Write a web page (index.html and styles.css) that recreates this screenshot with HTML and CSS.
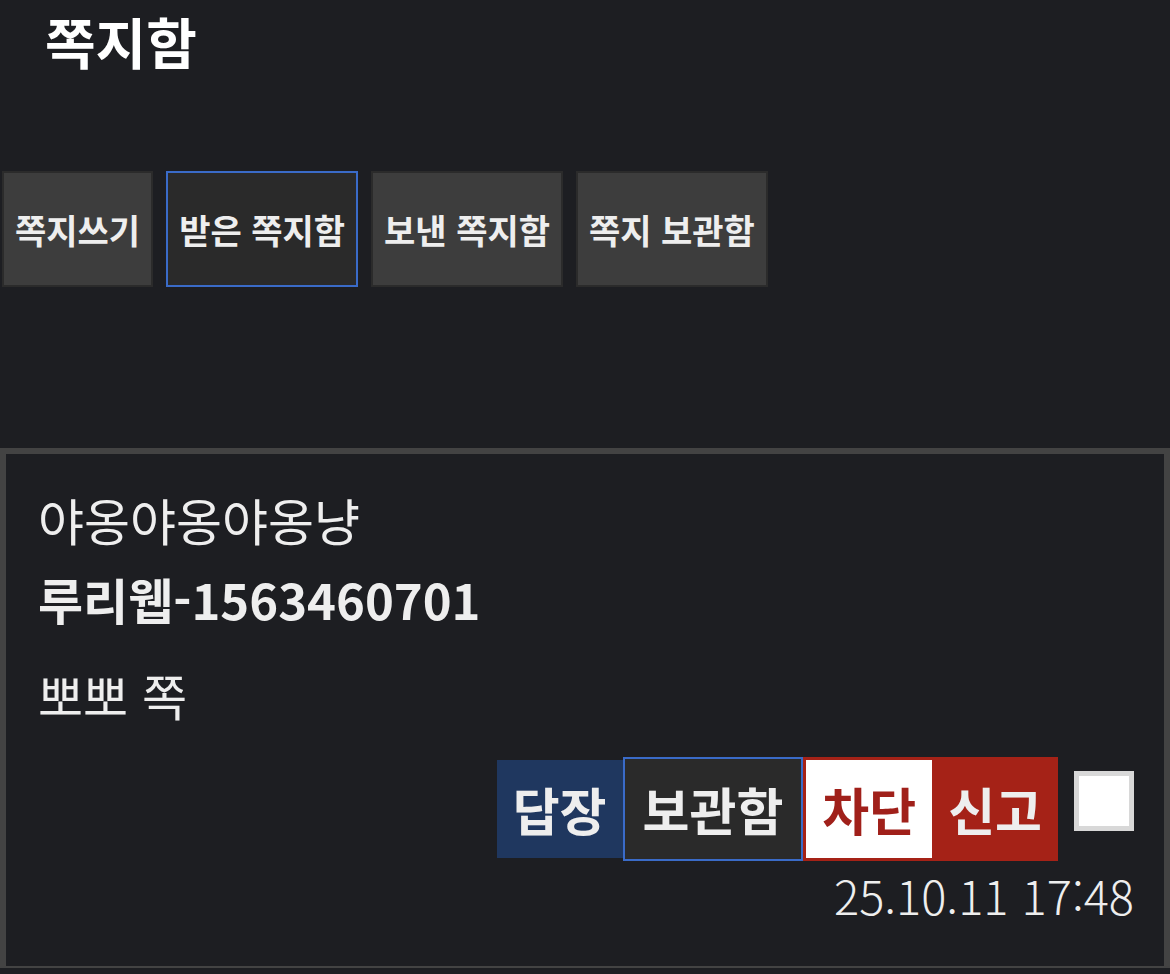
FILE: index.html
```html
<!DOCTYPE html>
<html lang="ko">
<head>
  <meta charset="UTF-8">
  <title>쪽지함</title>
  <link rel="stylesheet" href="styles.css">
</head>
<body>

  <div class="header">
    <h1>쪽지함</h1>
  </div>

  <!-- Tabs -->
  <div class="tabs">
    <a class="tab">쪽지쓰기</a>
    <a class="tab active">받은 쪽지함</a>
    <a class="tab">보낸 쪽지함</a>
    <a class="tab">쪽지 보관함</a>
  </div>

  <!-- Message -->
  <div class="message">
    <p class="subject">야옹야옹야옹냥</p>
    <p class="sender">루리웹-1563460701</p>
    <p class="body">뽀뽀 쪽</p>

    <div class="actions">
      <button class="btn reply">답장</button>
      <button class="btn keep">보관함</button>
      <button class="btn block">차단</button>
      <button class="btn report">신고</button>
      <span class="check"></span>
    </div>
    <div class="date">25.10.11 17:48</div>
  </div>

</body>
</html>
```

FILE: styles.css
```css
body {
  font-family: "Noto Sans CJK KR", "Noto Sans", sans-serif;
  background-color: #1d1e22;
  color: #eeeeee;
  margin: 0;
  padding: 0;
}

.header {
  height: 80px;
  padding-left: 45px;
  display: flex;
  align-items: center;
}

.header h1 {
  margin: 0;
  font-size: 55px;
  font-weight: 700;
  color: #ffffff;
  line-height: 1;
}

.tabs {
  display: flex;
  gap: 13px;
  padding: 91px 0 0 2px;
  height: 116px;
}

.tab {
  background-color: #3d3d3d;
  border: 2px solid #2b2b2b;
  height: 116px;
  box-sizing: border-box;
  padding: 0 11px;
  display: flex;
  align-items: center;
  font-size: 34px;
  font-weight: 700;
  color: #eeeeee;
}

.tab.active {
  background-color: #2a2a2a;
  border-color: #3a6bc8;
}

.message {
  margin-top: 161px;
  border: 6px solid #434343;
  border-bottom-width: 2px;
  padding: 25px 30px 0 32px;
  height: 520px;
  box-sizing: border-box;
}

.message p {
  margin: 0;
}

.message .subject {
  font-size: 50px;
  font-weight: 400;
  line-height: 80px;
}

.message .sender {
  font-size: 49px;
  font-weight: 700;
  line-height: 80px;
}

.message .body {
  font-size: 49px;
  font-weight: 400;
  line-height: 80px;
  margin-top: 16px;
}

.actions {
  display: flex;
  justify-content: flex-end;
  align-items: center;
  margin-top: 22px;
}

.btn {
  font-family: inherit;
  font-size: 51px;
  font-weight: 700;
  height: 104px;
  border: none;
  padding: 0 16px;
  color: #eeeeee;
  line-height: 1;
}

.reply {
  background-color: #1f375f;
  height: 98px;
}

.keep {
  background-color: #2a2a2a;
  border: 2px solid #3a6bc8;
  padding: 0 18px;
}

.block {
  background-color: #ffffff;
  color: #a0201a;
  border: 3px solid #a52217;
  border-right: none;
}

.report {
  background-color: #a52217;
}

.check {
  width: 50px;
  height: 50px;
  background-color: #ffffff;
  border: 5px solid #d8d8d8;
  margin: 0 0 16px 16px;
}

.date {
  text-align: right;
  font-size: 47px;
  font-weight: 300;
  line-height: 60px;
  margin-top: 4px;
}
```
